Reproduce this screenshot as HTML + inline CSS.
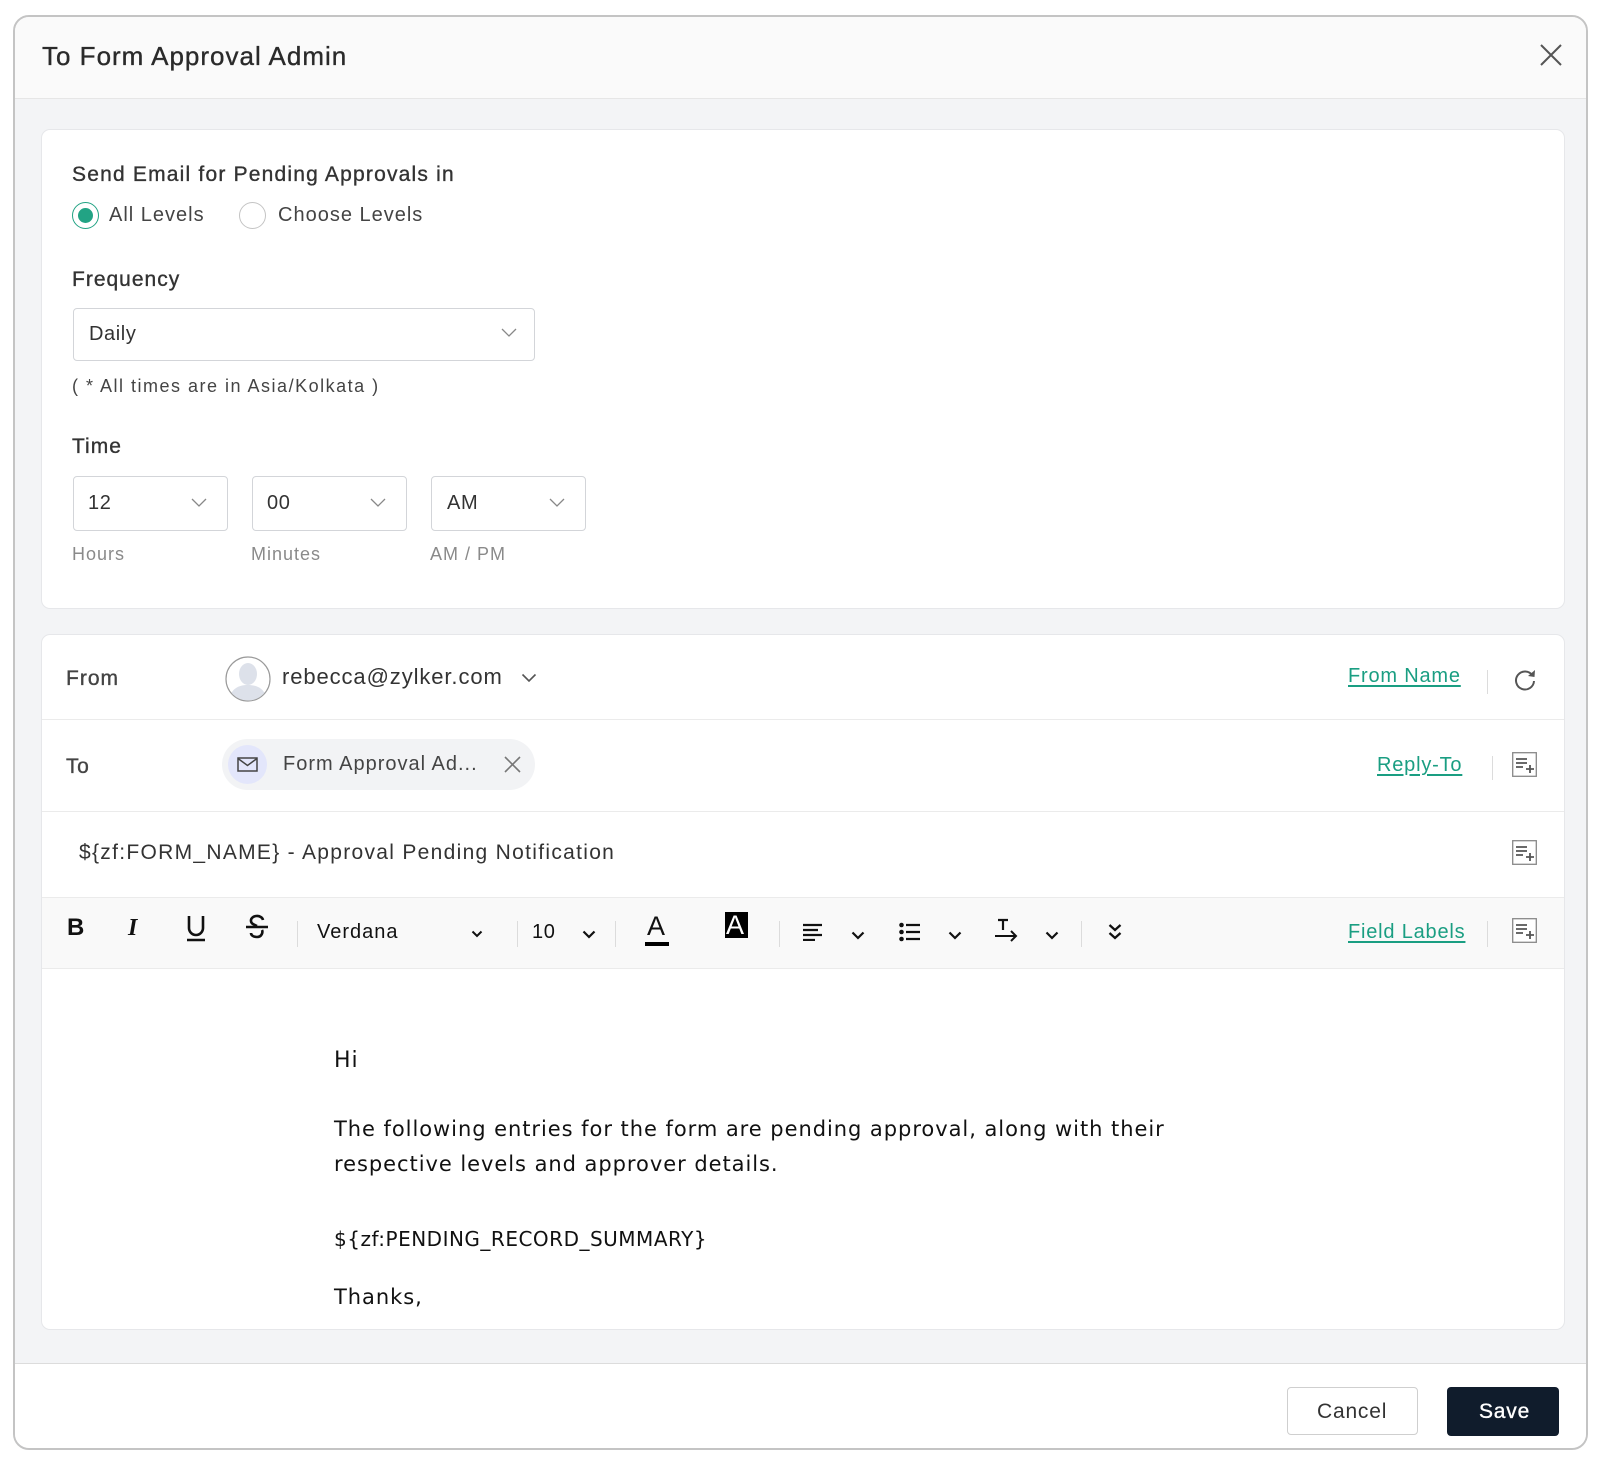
<!DOCTYPE html>
<html><head><meta charset="utf-8"><style>
*{box-sizing:border-box;margin:0;padding:0}
body{width:1602px;height:1460px;background:#fff;font-family:"Liberation Sans",sans-serif;color:#222;position:relative;overflow:hidden}
.a{position:absolute}
.dlg{left:13px;top:15px;width:1575px;height:1435px;border:2px solid #c4c4c4;border-radius:16px;overflow:hidden;background:#f3f4f6}
.t{position:absolute;white-space:nowrap;line-height:1;letter-spacing:0.6px}
.m{-webkit-text-stroke:0.35px currentColor}
.card{position:absolute;background:#fff;border:1px solid #e6e7ea;border-radius:9px}
.box{position:absolute;border:1px solid #d3d5d9;border-radius:4px;background:#fff}
.chev{position:absolute}
.link{color:#1a9e82;text-decoration:underline;text-underline-offset:3px;font-size:20px;letter-spacing:0.8px}
.sep{position:absolute;width:1px;background:#dcdcdc}
.row{position:absolute;left:0;width:100%;border-bottom:1px solid #ebebeb}
</style></head><body>
<div class="a dlg">
  <div class="a" style="left:0;top:0;width:100%;height:82px;background:#fafafa;border-bottom:1px solid #e6e6e6"></div>
  <div class="t m" style="left:27px;top:26px;font-size:26px;color:#2a2a2a;letter-spacing:1px">To Form Approval Admin</div>
  <svg class="a" style="left:1524px;top:26px" width="24" height="24" viewBox="0 0 24 24"><path d="M2 2L22 22M22 2L2 22" stroke="#555" stroke-width="2" fill="none"/></svg>

  <div class="card" style="left:26px;top:112px;width:1524px;height:480px">
    <div class="t m" style="left:30px;top:34px;font-size:21px;color:#333;letter-spacing:1.2px">Send Email for Pending Approvals in</div>
    <div class="a" style="left:30px;top:72px;width:27px;height:27px;border:1.5px solid #22a384;border-radius:50%"></div>
    <div class="a" style="left:36px;top:78px;width:15px;height:15px;background:#22a384;border-radius:50%"></div>
    <div class="t" style="left:67px;top:75px;font-size:20px;color:#444;letter-spacing:1px">All Levels</div>
    <div class="a" style="left:197px;top:72px;width:27px;height:27px;border:1.5px solid #c4c4c4;border-radius:50%"></div>
    <div class="t" style="left:236px;top:75px;font-size:20px;color:#444;letter-spacing:1px">Choose Levels</div>
    <div class="t m" style="left:30px;top:139px;font-size:21px;color:#333;letter-spacing:1px">Frequency</div>
    <div class="box" style="left:31px;top:178px;width:462px;height:53px"></div>
    <div class="t" style="left:47px;top:194px;font-size:20px;color:#333">Daily</div>
    <svg class="chev" style="left:459px;top:198px" width="16" height="10" viewBox="0 0 16 10"><path d="M1 1L8 8L15 1" stroke="#888" stroke-width="1.3" fill="none"/></svg>
    <div class="t" style="left:30px;top:247px;font-size:18px;color:#444;letter-spacing:1.5px">( * All times are in Asia/Kolkata )</div>
    <div class="t m" style="left:30px;top:306px;font-size:21px;color:#333;letter-spacing:1px">Time</div>
    <div class="box" style="left:31px;top:346px;width:155px;height:55px"></div>
    <div class="t" style="left:46px;top:363px;font-size:20px;color:#333">12</div>
    <svg class="chev" style="left:149px;top:368px" width="16" height="10" viewBox="0 0 16 10"><path d="M1 1L8 8L15 1" stroke="#888" stroke-width="1.3" fill="none"/></svg>
    <div class="box" style="left:210px;top:346px;width:155px;height:55px"></div>
    <div class="t" style="left:225px;top:363px;font-size:20px;color:#333">00</div>
    <svg class="chev" style="left:328px;top:368px" width="16" height="10" viewBox="0 0 16 10"><path d="M1 1L8 8L15 1" stroke="#888" stroke-width="1.3" fill="none"/></svg>
    <div class="box" style="left:389px;top:346px;width:155px;height:55px"></div>
    <div class="t" style="left:405px;top:363px;font-size:20px;color:#333">AM</div>
    <svg class="chev" style="left:507px;top:368px" width="16" height="10" viewBox="0 0 16 10"><path d="M1 1L8 8L15 1" stroke="#888" stroke-width="1.3" fill="none"/></svg>
    <div class="t" style="left:30px;top:415px;font-size:18px;color:#8a8a8a;letter-spacing:1px">Hours</div>
    <div class="t" style="left:209px;top:415px;font-size:18px;color:#8a8a8a;letter-spacing:1px">Minutes</div>
    <div class="t" style="left:388px;top:415px;font-size:18px;color:#8a8a8a;letter-spacing:1px">AM / PM</div>
  </div>

  <div class="card" style="left:26px;top:617px;width:1524px;height:696px;overflow:hidden">
    <div class="row" style="top:0;height:85px"></div>
    <div class="t m" style="left:24px;top:33px;font-size:21px;color:#444;letter-spacing:1px">From</div>
    <svg class="a" style="left:183px;top:21px" width="46" height="46" viewBox="0 0 46 46"><defs><clipPath id="c"><circle cx="23" cy="23" r="21.5"/></clipPath></defs><circle cx="23" cy="23" r="22" fill="#fff" stroke="#9a9a9a" stroke-width="1.2"/><g clip-path="url(#c)" fill="#dde1ea"><ellipse cx="23" cy="18" rx="9" ry="11"/><path d="M4 46C5 33 13 29 23 29C33 29 41 33 42 46Z"/></g></svg>
    <div class="t" style="left:240px;top:31px;font-size:22px;color:#333;letter-spacing:0.9px">rebecca@zylker.com</div>
    <svg class="chev" style="left:479px;top:38px" width="16" height="10" viewBox="0 0 16 10"><path d="M1.5 1.5L8 8L14.5 1.5" stroke="#555" stroke-width="1.6" fill="none"/></svg>
    <div class="t link" style="left:1306px;top:31px">From Name</div>
    <div class="sep" style="left:1445px;top:35px;height:24px"></div>
    <svg class="a" style="left:1470px;top:32px" width="26" height="26" viewBox="0 0 26 26"><path d="M20.5 8.5A9 9 0 1 0 22 14" stroke="#555" stroke-width="2" fill="none"/><path d="M23 3L22.5 10L16 9Z" fill="#555"/></svg>

    <div class="row" style="top:85px;height:92px"></div>
    <div class="t m" style="left:24px;top:121px;font-size:21px;color:#444">To</div>
    <div class="a" style="left:180px;top:104px;width:313px;height:51px;background:#f2f3f5;border-radius:26px"></div>
    <div class="a" style="left:186px;top:110px;width:39px;height:39px;background:#e3e6fb;border-radius:50%"></div>
    <svg class="a" style="left:195px;top:122px" width="21" height="15" viewBox="0 0 21 15"><rect x="1" y="1" width="19" height="13" fill="none" stroke="#444" stroke-width="1.5"/><path d="M1 1.5L10.5 8.5L20 1.5" fill="none" stroke="#444" stroke-width="1.5"/></svg>
    <div class="t" style="left:241px;top:119px;font-size:20px;color:#444;letter-spacing:1px">Form Approval Ad...</div>
    <svg class="a" style="left:462px;top:121px" width="17" height="17" viewBox="0 0 17 17"><path d="M1 1L16 16M16 1L1 16" stroke="#777" stroke-width="1.6"/></svg>
    <div class="t link" style="left:1335px;top:120px">Reply-To</div>
    <div class="sep" style="left:1450px;top:121px;height:24px"></div>

    <div class="row" style="top:177px;height:86px"></div>
    <div class="t" style="left:37px;top:207px;font-size:21px;color:#333;letter-spacing:1.3px">${zf:FORM_NAME} - Approval Pending Notification</div>

    <div class="row" style="top:263px;height:71px;background:#f9f9f9"></div>
    <div class="t" style="left:25px;top:281px;font-size:24px;font-weight:bold;color:#111">B</div>
    <div class="t" style="left:86px;top:281px;font-size:24px;font-weight:bold;font-style:italic;font-family:'Liberation Serif',serif;color:#111">I</div>
    <svg class="a" style="left:143px;top:279px" width="22" height="28" viewBox="0 0 22 28"><path d="M4 2V14A7 7 0 0 0 18 14V2" stroke="#111" stroke-width="2.6" fill="none"/><path d="M2 26H20" stroke="#111" stroke-width="2.6"/></svg>
    <svg class="a" style="left:202px;top:279px" width="26" height="28" viewBox="0 0 26 28"><path d="M19 6A6 4.5 0 0 0 7 7C7 10 11 11 13 12" stroke="#111" stroke-width="2.6" fill="none"/><path d="M2 13H24" stroke="#111" stroke-width="2.4"/><path d="M18 16C19 18 18 23 13 23C9 23 7 21 7 19" stroke="#111" stroke-width="2.6" fill="none"/></svg>
    <div class="sep" style="left:255px;top:286px;height:26px"></div>
    <div class="t" style="left:275px;top:287px;font-size:20px;color:#111;letter-spacing:1px">Verdana</div>
    <svg class="chev" style="left:429px;top:295px" width="12" height="8" viewBox="0 0 12 8"><path d="M1.5 1.5L6 6L10.5 1.5" stroke="#111" stroke-width="2" fill="none"/></svg>
    <div class="sep" style="left:475px;top:286px;height:26px"></div>
    <div class="t" style="left:490px;top:287px;font-size:20px;color:#111">10</div>
    <svg class="chev" style="left:540px;top:295px" width="14" height="9" viewBox="0 0 14 9"><path d="M1.5 1.5L7 7L12.5 1.5" stroke="#111" stroke-width="2.2" fill="none"/></svg>
    <div class="sep" style="left:573px;top:286px;height:26px"></div>
    <div class="t" style="left:605px;top:278px;font-size:27px;color:#111;letter-spacing:0">A</div>
    <div class="a" style="left:603px;top:307px;width:24px;height:4px;background:#000"></div>
    <div class="a" style="left:683px;top:277px;width:23px;height:26px;background:#000"></div>
    <div class="t" style="left:684px;top:277px;font-size:27px;color:#fff;letter-spacing:0">A</div>
    <div class="sep" style="left:737px;top:286px;height:26px"></div>
    <svg class="a" style="left:761px;top:288px" width="20" height="18" viewBox="0 0 20 18"><path d="M0 2H19M0 7H15M0 12H19M0 17H12" stroke="#111" stroke-width="2.2"/></svg>
    <svg class="chev" style="left:809px;top:296px" width="14" height="9" viewBox="0 0 14 9"><path d="M1.5 1.5L7 7L12.5 1.5" stroke="#111" stroke-width="2.2" fill="none"/></svg>
    <svg class="a" style="left:857px;top:287px" width="22" height="20" viewBox="0 0 22 20"><circle cx="2.5" cy="3" r="2.3" fill="#111"/><circle cx="2.5" cy="10" r="2.3" fill="#111"/><circle cx="2.5" cy="17" r="2.3" fill="#111"/><path d="M7 3H21M7 10H21M7 17H21" stroke="#111" stroke-width="2.2"/></svg>
    <svg class="chev" style="left:906px;top:296px" width="14" height="9" viewBox="0 0 14 9"><path d="M1.5 1.5L7 7L12.5 1.5" stroke="#111" stroke-width="2.2" fill="none"/></svg>
    <svg class="a" style="left:953px;top:283px" width="24" height="24" viewBox="0 0 24 24"><path d="M3 2H13M8 2V12" stroke="#111" stroke-width="2.2"/><path d="M0 18H21M16 13L21 18L16 23" stroke="#111" stroke-width="2" fill="none"/></svg>
    <svg class="chev" style="left:1003px;top:296px" width="14" height="9" viewBox="0 0 14 9"><path d="M1.5 1.5L7 7L12.5 1.5" stroke="#111" stroke-width="2.2" fill="none"/></svg>
    <div class="sep" style="left:1039px;top:286px;height:26px"></div>
    <svg class="a" style="left:1066px;top:288px" width="14" height="18" viewBox="0 0 14 18"><path d="M1.5 2L7 7L12.5 2M1.5 10L7 15L12.5 10" stroke="#111" stroke-width="2.3" fill="none"/></svg>
    <div class="t link" style="left:1306px;top:287px">Field Labels</div>
    <div class="sep" style="left:1445px;top:286px;height:26px"></div>

    <div style="position:absolute;left:292px;top:408px;font-family:'DejaVu Sans',Verdana,sans-serif;font-size:21px;color:#111;line-height:35px;white-space:nowrap;letter-spacing:0.95px">
      <div style="font-size:22px">Hi</div>
      <div style="margin-top:34px">The following entries for the form are pending approval, along with their<br>respective levels and approver details.</div>
      <div style="margin-top:40px;font-size:20px;letter-spacing:0.5px">${zf:PENDING_RECORD_SUMMARY}</div>
      <div style="margin-top:23px">Thanks,</div>
    </div>
  </div>
  <svg class="a" style="left:1497px;top:735px" width="25" height="25" viewBox="0 0 25 25"><rect x="0.7" y="0.7" width="23.6" height="23.6" fill="#fff" stroke="#888" stroke-width="1.3"/><path d="M4 7H15M4 11H15M4 15H11M14 17H22M18 13V21" stroke="#555" stroke-width="1.8"/></svg>
  <svg class="a" style="left:1497px;top:823px" width="25" height="25" viewBox="0 0 25 25"><rect x="0.7" y="0.7" width="23.6" height="23.6" fill="#fff" stroke="#888" stroke-width="1.3"/><path d="M4 7H15M4 11H15M4 15H11M14 17H22M18 13V21" stroke="#555" stroke-width="1.8"/></svg>
  <svg class="a" style="left:1497px;top:901px" width="25" height="25" viewBox="0 0 25 25"><rect x="0.7" y="0.7" width="23.6" height="23.6" fill="#fff" stroke="#888" stroke-width="1.3"/><path d="M4 7H15M4 11H15M4 15H11M14 17H22M18 13V21" stroke="#555" stroke-width="1.8"/></svg>

  <div class="a" style="left:0;top:1346px;width:100%;height:100px;background:#fff;border-top:1px solid #dcdcdc"></div>
  <div class="a" style="left:1272px;top:1370px;width:131px;height:48px;border:1px solid #cfcfcf;border-radius:4px;background:#fff"></div>
  <div class="t" style="left:1302px;top:1384px;font-size:21px;color:#333;letter-spacing:0.8px">Cancel</div>
  <div class="a" style="left:1432px;top:1370px;width:112px;height:49px;background:#101c2c;border-radius:4px"></div>
  <div class="t m" style="left:1464px;top:1384px;font-size:21px;color:#fff;letter-spacing:0.8px">Save</div>
</div>
</body></html>
